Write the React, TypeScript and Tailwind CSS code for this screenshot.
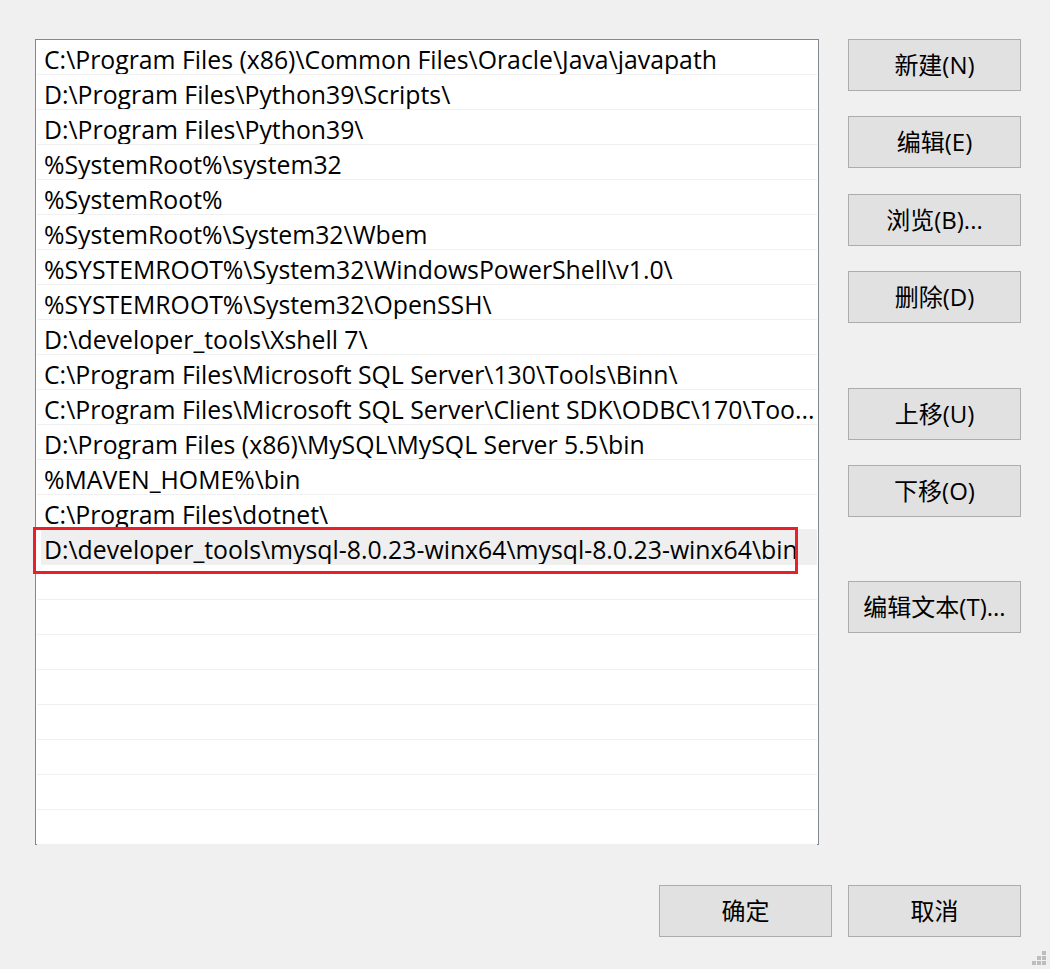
import React from "react";

const paths = [
  "C:\\Program Files (x86)\\Common Files\\Oracle\\Java\\javapath",
  "D:\\Program Files\\Python39\\Scripts\\",
  "D:\\Program Files\\Python39\\",
  "%SystemRoot%\\system32",
  "%SystemRoot%",
  "%SystemRoot%\\System32\\Wbem",
  "%SYSTEMROOT%\\System32\\WindowsPowerShell\\v1.0\\",
  "%SYSTEMROOT%\\System32\\OpenSSH\\",
  "D:\\developer_tools\\Xshell 7\\",
  "C:\\Program Files\\Microsoft SQL Server\\130\\Tools\\Binn\\",
  "C:\\Program Files\\Microsoft SQL Server\\Client SDK\\ODBC\\170\\Too...",
  "D:\\Program Files (x86)\\MySQL\\MySQL Server 5.5\\bin",
  "%MAVEN_HOME%\\bin",
  "C:\\Program Files\\dotnet\\",
  "D:\\developer_tools\\mysql-8.0.23-winx64\\mysql-8.0.23-winx64\\bin",
];

const font = "font-['Open_Sans','Noto_Sans_CJK_SC',sans-serif]";

function WinButton({ label, className = "" }: { label: string; className?: string }) {
  return (
    <button
      className={`w-[173px] h-[52px] border border-[#adadad] bg-[#e1e1e1] text-[24px] leading-none text-black flex items-center justify-center ${className}`}
    >
      {label}
    </button>
  );
}

function Grip() {
  const dots = [
    [10, 0],
    [5, 5],
    [10, 5],
    [0, 10],
    [5, 10],
    [10, 10],
  ];
  return (
    <svg width="14" height="14" viewBox="0 0 14 14" className="absolute right-[4px] bottom-[4px]">
      {dots.map(([x, y], i) => (
        <rect key={i} x={x} y={y} width="4" height="4" fill="#bdbdbd" />
      ))}
    </svg>
  );
}

export default function App() {
  const rows = [...paths];
  while (rows.length < 23) rows.push("");

  return (
    <div className={`relative w-[1050px] h-[969px] bg-[#f0f0f0] ${font} text-black`}>
      <div className="flex pt-[39px] pl-[35px]">
        <div className="relative w-[784px] h-[806px] border border-[#828790] bg-white px-[1px]">
          {rows.map((p, i) => (
            <div
              key={i}
              className={`h-[35px] border-b border-[#f0f0f0] flex items-center overflow-hidden ${
                i === 14 ? "bg-[#efefef] ml-[4px]" : ""
              }`}
            >
              <span
                className={`block whitespace-nowrap text-[24.8px] leading-[34px] pt-[3px] ${
                  i === 14 ? "pl-[3px]" : "pl-[7px]"
                }`}
              >
                {p}
              </span>
            </div>
          ))}
          <div className="absolute left-[-3px] top-[487px] w-[765px] h-[47px] border-[3px] border-[#e8202a]" />
        </div>
        <div className="ml-[29px] flex flex-col">
          <WinButton label="新建(N)" />
          <WinButton label="编辑(E)" className="mt-[25px]" />
          <WinButton label="浏览(B)..." className="mt-[26px]" />
          <WinButton label="删除(D)" className="mt-[25px]" />
          <WinButton label="上移(U)" className="mt-[65px]" />
          <WinButton label="下移(O)" className="mt-[25px]" />
          <WinButton label="编辑文本(T)..." className="mt-[64px]" />
        </div>
      </div>
      <div className="flex justify-end gap-[16px] pr-[29px] mt-[40px]">
        <WinButton label="确定" />
        <WinButton label="取消" />
      </div>
      <Grip />
    </div>
  );
}
